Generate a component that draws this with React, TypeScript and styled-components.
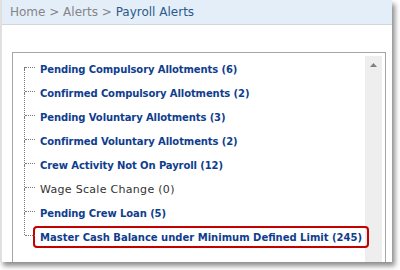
import styled, { createGlobalStyle } from "styled-components";

const GlobalStyle = createGlobalStyle`
  html, body {
    margin: 0;
    padding: 0;
    background: #ffffff;
  }
`;

const Page = styled.div`
  width: 400px;
  height: 270px;
  overflow: hidden;
  background: #ffffff;
`;

const Panel = styled.div`
  width: 390px;
  height: 262px;
  border-left: 2px solid #e0e0e0;
  background: #ffffff;
  box-shadow: 3px 4px 5px rgba(0, 0, 0, 0.45);
  overflow: hidden;
  display: flex;
  flex-direction: column;
`;

const Breadcrumb = styled.div`
  height: 24px;
  flex: none;
  display: flex;
  align-items: center;
  padding-left: 8px;
  background: #e4eef9;
  border-bottom: 1px solid #d2d6db;
  font-family: "DejaVu Sans", Verdana, sans-serif;
  font-size: 12px;
  color: #858585;
  white-space: nowrap;
`;

const Current = styled.span`
  color: #2b5a8a;
`;

const Frame = styled.div`
  margin: 27px 0 0 10px;
  width: 366px;
  height: 300px;
  flex: none;
  border: 1px solid #a6a6a6;
  padding: 3px;
  display: flex;
`;

const Tree = styled.ul`
  list-style: none;
  margin: 0;
  padding: 1px 0 0 8px;
  flex: 1;
  min-width: 0;
`;

const Item = styled.li<{ $last?: boolean }>`
  position: relative;
  height: 24px;
  display: flex;
  align-items: center;
  padding-left: 16px;

  &::before {
    content: "";
    position: absolute;
    left: 0;
    top: -12px;
    height: ${(p) => (p.$last ? "22px" : "24px")};
    border-left: 1px dotted #7a7a7a;
  }

  &:first-child::before {
    top: 10px;
    height: 2px;
  }

  &::after {
    content: "";
    position: absolute;
    left: 1px;
    top: 10px;
    width: 10px;
    border-top: 1px dotted #7a7a7a;
  }
`;

const Label = styled.span<{ $muted?: boolean }>`
  font-family: "DejaVu Sans", Verdana, sans-serif;
  font-size: ${(p) => (p.$muted ? "11px" : "10px")};
  font-weight: ${(p) => (p.$muted ? 400 : 700)};
  letter-spacing: ${(p) => (p.$muted ? "0.3px" : "-0.1px")};
  color: ${(p) => (p.$muted ? "#333333" : "#0f3d8e")};
  white-space: nowrap;
`;

const Highlight = styled(Label)`
  flex: 1;
  margin-left: -7px;
  margin-right: -1px;
  height: 18px;
  display: flex;
  align-items: center;
  padding: 0 5px;
  border: 2px solid #c40000;
  border-radius: 4px;
  letter-spacing: 0;
`;

const Scrollbar = styled.div`
  width: 17px;
  flex: none;
  background: #eeeeee;
  display: flex;
  justify-content: center;
  padding-top: 7px;
  align-items: flex-start;
`;

const alerts = [
  { label: "Pending Compulsory Allotments (6)" },
  { label: "Confirmed Compulsory Allotments (2)" },
  { label: "Pending Voluntary Allotments (3)" },
  { label: "Confirmed Voluntary Allotments (2)" },
  { label: "Crew Activity Not On Payroll (12)" },
  { label: "Wage Scale Change (0)", muted: true },
  { label: "Pending Crew Loan (5)" },
];

export default function App() {
  return (
    <Page>
      <GlobalStyle />
      <Panel>
        <Breadcrumb>
          Home &gt; Alerts &gt;&nbsp;<Current>Payroll Alerts</Current>
        </Breadcrumb>
        <Frame>
          <Tree>
            {alerts.map((a) => (
              <Item key={a.label}>
                <Label $muted={a.muted}>{a.label}</Label>
              </Item>
            ))}
            <Item $last>
              <Highlight>Master Cash Balance under Minimum Defined Limit (245)</Highlight>
            </Item>
          </Tree>
          <Scrollbar>
            <svg width="7" height="4" viewBox="0 0 7 4">
              <path d="M3.5 0 L7 4 L0 4 Z" fill="#808080" />
            </svg>
          </Scrollbar>
        </Frame>
      </Panel>
    </Page>
  );
}
